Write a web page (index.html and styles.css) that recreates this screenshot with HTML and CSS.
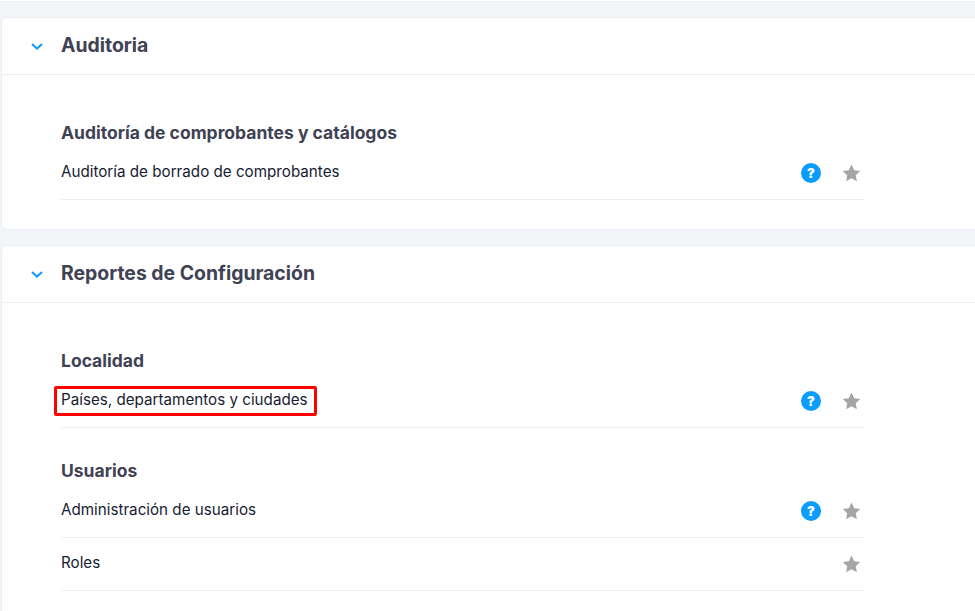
FILE: index.html
```html
<!DOCTYPE html>
<html lang="es">
<head>
<meta charset="utf-8">
<title>Reportes</title>
<link rel="stylesheet" href="styles.css">
</head>
<body>
<svg class="defs" width="0" height="0" aria-hidden="true">
  <symbol id="star" viewBox="0 0 20 19"><path d="M10 .6l2.800 5.900 6.400.8-4.700 4.500 1.200 6.400L10 15.100l-5.700 3.100 1.200-6.400L.8 7.300l6.400-.8z"/></symbol>
</svg>
<div class="top-strip"></div>
<main class="page">
  <section class="card card-one">
    <header class="card-head">
      <svg class="chev" viewBox="0 0 12 7"><path d="M1 1l5 4.600L11 1"/></svg>
      <h2>Auditoria</h2>
    </header>
    <div class="card-body">
      <h3>Auditoría de comprobantes y catálogos</h3>
      <div class="row">
        <span class="label">Auditoría de borrado de comprobantes</span>
        <span class="help">?</span>
        <svg class="star"><use href="#star"/></svg>
      </div>
    </div>
  </section>
  <section class="card card-two">
    <header class="card-head">
      <svg class="chev" viewBox="0 0 12 7"><path d="M1 1l5 4.600L11 1"/></svg>
      <h2>Reportes de Configuración</h2>
    </header>
    <div class="card-body">
      <h3>Localidad</h3>
      <div class="row">
        <span class="label marked">Países, departamentos y ciudades</span>
        <span class="help">?</span>
        <svg class="star"><use href="#star"/></svg>
      </div>
      <h3 class="next">Usuarios</h3>
      <div class="row">
        <span class="label">Administración de usuarios</span>
        <span class="help">?</span>
        <svg class="star"><use href="#star"/></svg>
      </div>
      <div class="row">
        <span class="label">Roles</span>
        <svg class="star"><use href="#star"/></svg>
      </div>
    </div>
  </section>
</main>
</body>
</html>
```
FILE: styles.css
```css
html, body { margin: 0; padding: 0; height: 100%; overflow: hidden; }
body {
  background: #f3f6f9;
  font-family: "Inter", "Noto Sans", sans-serif;
  color: #181c32;
}
.defs { position: absolute; }
.top-strip {
  height: 1px;
  background: #fff;
  border-bottom: 1px solid #ebedf3;
}
.page {
  display: flex;
  flex-direction: column;
  gap: 15px;
  padding: 15px 0 0 1px;
}
.card {
  background: #fff;
  border: 1px solid #ebedf3;
  border-right: 0;
  border-radius: 6px 0 0 6px;
}
.card-one { box-sizing: border-box; height: 213px; }
.card-two { padding-bottom: 20px; border-bottom: 0; border-radius: 6px 0 0 0; }
.card-head {
  display: flex;
  align-items: center;
  height: 56px;
  border-bottom: 1px solid #ebedf3;
  padding-left: 29px;
}
.chev { width: 12px; height: 7px; fill: none; stroke: #0a9cff; stroke-width: 2; margin-right: 18px; }
h2 { margin: 0 0 2px; font-size: 19.400px; font-weight: 700; color: #3f4254; }
.card-body { padding: 48px 111px 0 59px; }
h3 { margin: 0 0 3px; height: 21px; line-height: 20px; font-size: 17.500px; font-weight: 700; color: #3f4254; }
h3.next { margin-top: 33px; }
.row {
  display: flex;
  align-items: center;
  height: 53px;
  box-sizing: border-box;
  border-bottom: 1px solid #ebedf3;
  font-size: 15.200px;
  color: #181c32;
}
.label { margin: 0 auto 3px 0; }
.marked { position: relative; }
.marked::after {
  content: "";
  position: absolute;
  left: -7px;
  right: -9px;
  top: -4px;
  bottom: -7px;
  border: 3px solid #f00;
  border-radius: 2px;
}
.help {
  display: flex;
  align-items: center;
  justify-content: center;
  width: 20px;
  height: 20px;
  border-radius: 50%;
  background: #0a9cff;
  color: #fff;
  font: 900 13px "Inter", sans-serif;
}
.star { width: 19px; height: 18px; fill: #a5a5a5; margin: 0 3px 0 21px; }
```
